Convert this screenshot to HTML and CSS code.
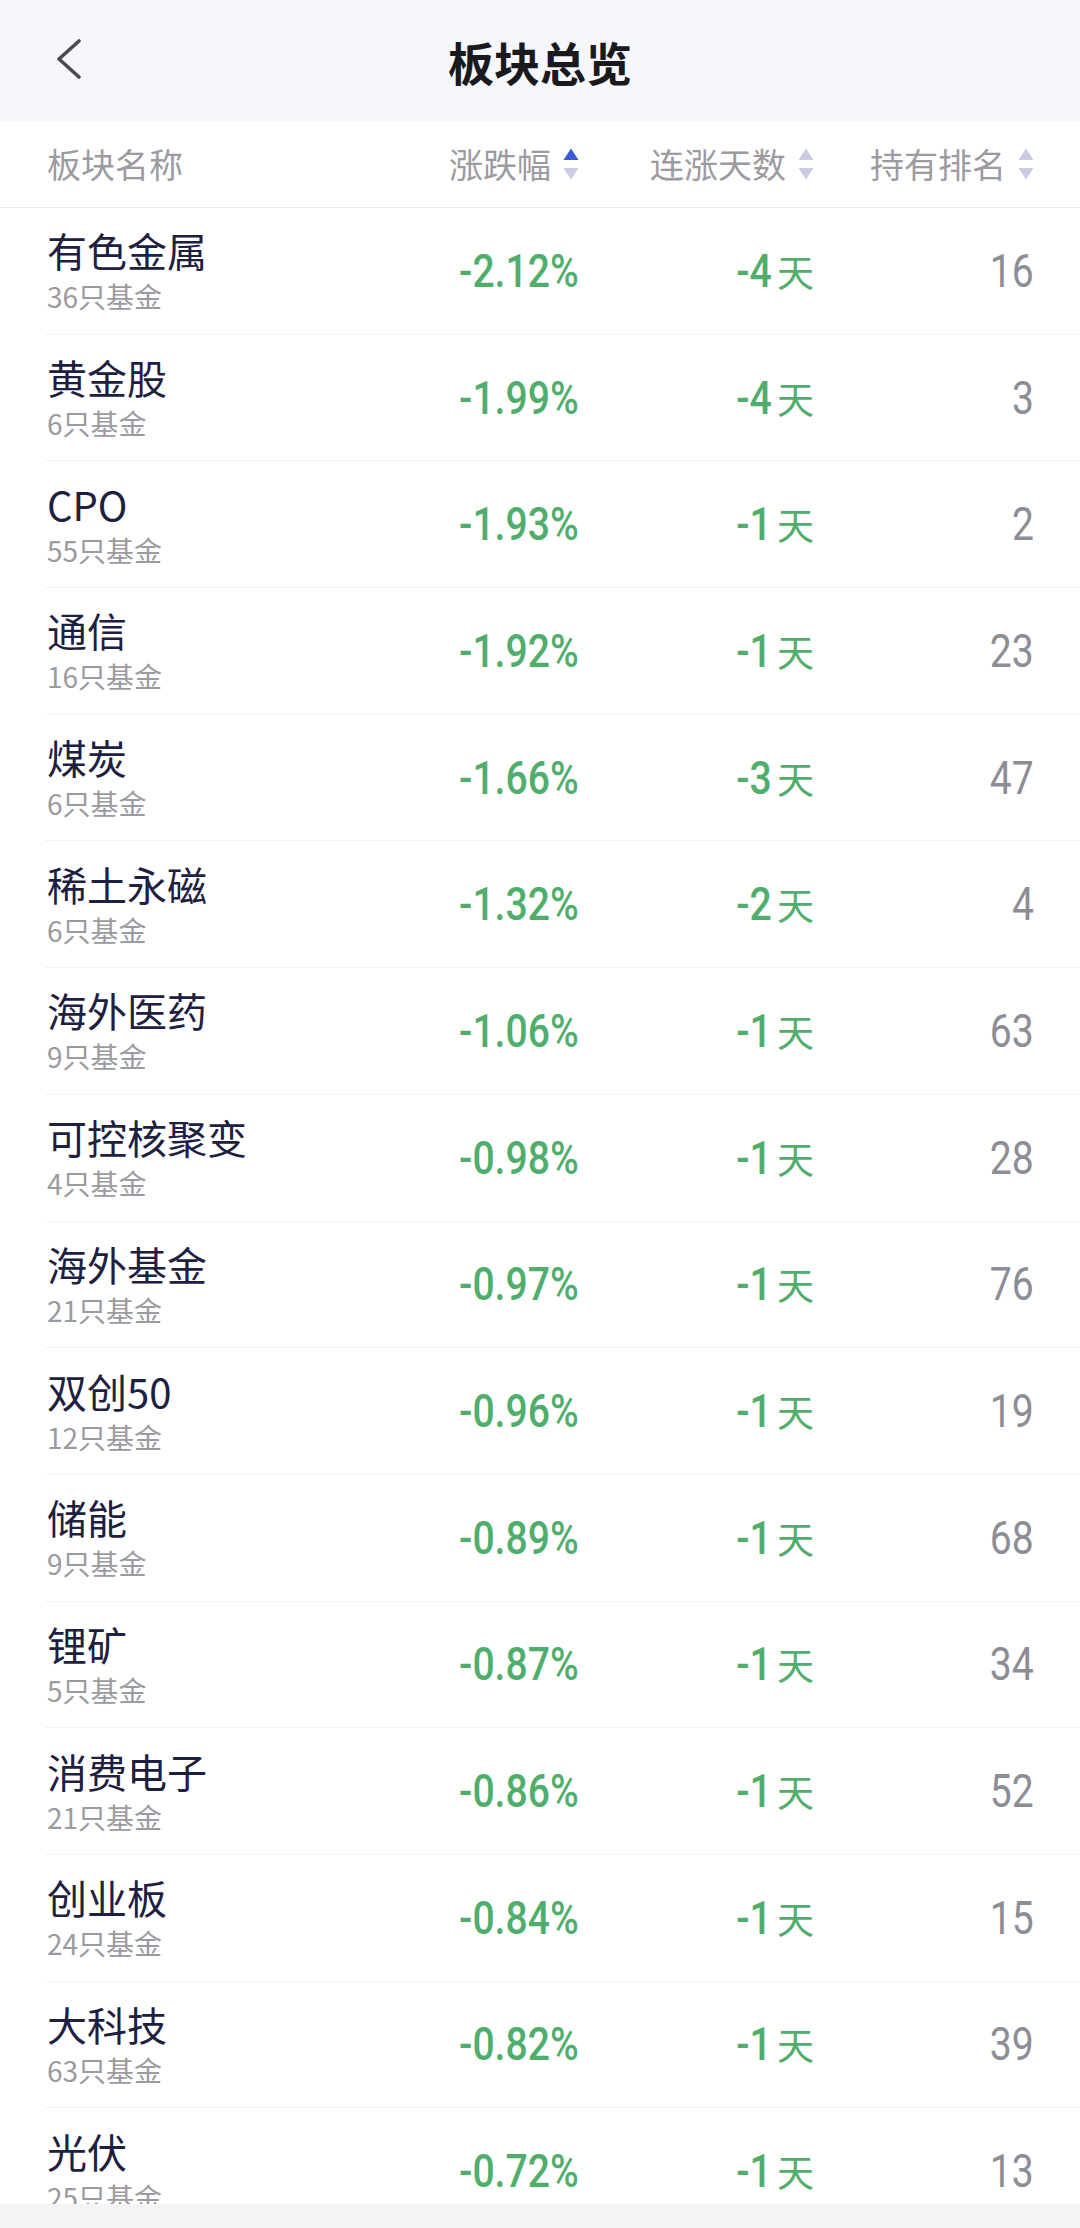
FILE: index.html
```html
<!DOCTYPE html>
<html lang="zh-CN">
<head>
<meta charset="utf-8">
<title>板块总览</title>
<link rel="stylesheet" href="styles.css">
</head>
<body>
<div class="page">
  <header class="nav">
    <div class="nav-left">
      <svg class="back" width="28" height="40" viewBox="0 0 28 40"><polyline points="23,2 3,20 23,38" fill="none" stroke="#4a4a50" stroke-width="3.6" stroke-linecap="round" stroke-linejoin="round"/></svg>
    </div>
    <h1 class="nav-title">板块总览</h1>
    <div class="nav-right"></div>
  </header>

  <div class="thead">
    <div class="col-name">板块名称</div>
    <div class="col col-chg">涨跌幅<svg class="sort" width="16" height="32" viewBox="0 0 16 32"><polygon points="8,0.5 15.5,12 0.5,12" fill="#3d5bd9"/><polygon points="0.5,20 15.5,20 8,31.5" fill="#c9cce3"/></svg></div>
    <div class="col col-days">连涨天数<svg class="sort" width="16" height="32" viewBox="0 0 16 32"><polygon points="8,0.5 15.5,12 0.5,12" fill="#c9cce3"/><polygon points="0.5,20 15.5,20 8,31.5" fill="#c9cce3"/></svg></div>
    <div class="col col-rank">持有排名<svg class="sort" width="16" height="32" viewBox="0 0 16 32"><polygon points="8,0.5 15.5,12 0.5,12" fill="#c9cce3"/><polygon points="0.5,20 15.5,20 8,31.5" fill="#c9cce3"/></svg></div>
  </div>

  <ul class="list">
    <li class="row"><div class="col-name"><div class="name">有色金属</div><div class="sub">36只基金</div></div><div class="col col-chg"><span class="num">-2.12%</span></div><div class="col col-days"><span class="num">-4</span><span class="unit">天</span></div><div class="col col-rank"><span class="num rank">16</span></div></li>
    <li class="row"><div class="col-name"><div class="name">黄金股</div><div class="sub">6只基金</div></div><div class="col col-chg"><span class="num">-1.99%</span></div><div class="col col-days"><span class="num">-4</span><span class="unit">天</span></div><div class="col col-rank"><span class="num rank">3</span></div></li>
    <li class="row"><div class="col-name"><div class="name">CPO</div><div class="sub">55只基金</div></div><div class="col col-chg"><span class="num">-1.93%</span></div><div class="col col-days"><span class="num">-1</span><span class="unit">天</span></div><div class="col col-rank"><span class="num rank">2</span></div></li>
    <li class="row"><div class="col-name"><div class="name">通信</div><div class="sub">16只基金</div></div><div class="col col-chg"><span class="num">-1.92%</span></div><div class="col col-days"><span class="num">-1</span><span class="unit">天</span></div><div class="col col-rank"><span class="num rank">23</span></div></li>
    <li class="row"><div class="col-name"><div class="name">煤炭</div><div class="sub">6只基金</div></div><div class="col col-chg"><span class="num">-1.66%</span></div><div class="col col-days"><span class="num">-3</span><span class="unit">天</span></div><div class="col col-rank"><span class="num rank">47</span></div></li>
    <li class="row"><div class="col-name"><div class="name">稀土永磁</div><div class="sub">6只基金</div></div><div class="col col-chg"><span class="num">-1.32%</span></div><div class="col col-days"><span class="num">-2</span><span class="unit">天</span></div><div class="col col-rank"><span class="num rank">4</span></div></li>
    <li class="row"><div class="col-name"><div class="name">海外医药</div><div class="sub">9只基金</div></div><div class="col col-chg"><span class="num">-1.06%</span></div><div class="col col-days"><span class="num">-1</span><span class="unit">天</span></div><div class="col col-rank"><span class="num rank">63</span></div></li>
    <li class="row"><div class="col-name"><div class="name">可控核聚变</div><div class="sub">4只基金</div></div><div class="col col-chg"><span class="num">-0.98%</span></div><div class="col col-days"><span class="num">-1</span><span class="unit">天</span></div><div class="col col-rank"><span class="num rank">28</span></div></li>
    <li class="row"><div class="col-name"><div class="name">海外基金</div><div class="sub">21只基金</div></div><div class="col col-chg"><span class="num">-0.97%</span></div><div class="col col-days"><span class="num">-1</span><span class="unit">天</span></div><div class="col col-rank"><span class="num rank">76</span></div></li>
    <li class="row"><div class="col-name"><div class="name">双创50</div><div class="sub">12只基金</div></div><div class="col col-chg"><span class="num">-0.96%</span></div><div class="col col-days"><span class="num">-1</span><span class="unit">天</span></div><div class="col col-rank"><span class="num rank">19</span></div></li>
    <li class="row"><div class="col-name"><div class="name">储能</div><div class="sub">9只基金</div></div><div class="col col-chg"><span class="num">-0.89%</span></div><div class="col col-days"><span class="num">-1</span><span class="unit">天</span></div><div class="col col-rank"><span class="num rank">68</span></div></li>
    <li class="row"><div class="col-name"><div class="name">锂矿</div><div class="sub">5只基金</div></div><div class="col col-chg"><span class="num">-0.87%</span></div><div class="col col-days"><span class="num">-1</span><span class="unit">天</span></div><div class="col col-rank"><span class="num rank">34</span></div></li>
    <li class="row"><div class="col-name"><div class="name">消费电子</div><div class="sub">21只基金</div></div><div class="col col-chg"><span class="num">-0.86%</span></div><div class="col col-days"><span class="num">-1</span><span class="unit">天</span></div><div class="col col-rank"><span class="num rank">52</span></div></li>
    <li class="row"><div class="col-name"><div class="name">创业板</div><div class="sub">24只基金</div></div><div class="col col-chg"><span class="num">-0.84%</span></div><div class="col col-days"><span class="num">-1</span><span class="unit">天</span></div><div class="col col-rank"><span class="num rank">15</span></div></li>
    <li class="row"><div class="col-name"><div class="name">大科技</div><div class="sub">63只基金</div></div><div class="col col-chg"><span class="num">-0.82%</span></div><div class="col col-days"><span class="num">-1</span><span class="unit">天</span></div><div class="col col-rank"><span class="num rank">39</span></div></li>
    <li class="row"><div class="col-name"><div class="name">光伏</div><div class="sub">25只基金</div></div><div class="col col-chg"><span class="num">-0.72%</span></div><div class="col col-days"><span class="num">-1</span><span class="unit">天</span></div><div class="col col-rank"><span class="num rank">13</span></div></li>
  </ul>

  <div class="bottom-bar"></div>
</div>
</body>
</html>
```

FILE: styles.css
```css
* { box-sizing: border-box; }

html, body {
  margin: 0;
  padding: 0;
  background: #ffffff;
}

body {
  font-family: "Noto Sans CJK SC", "Noto Sans", sans-serif;
  color: #1d2040;
}

.page {
  width: 1080px;
  height: 2228px;
  display: flex;
  flex-direction: column;
  overflow: hidden;
  background: #ffffff;
}

/* navigation bar */
.nav {
  flex: 0 0 121px;
  height: 121px;
  background: #f6f7fb;
  display: grid;
  grid-template-columns: 1fr auto 1fr;
  align-items: center;
}

.nav-left {
  display: flex;
  align-items: center;
  padding-left: 56px;
  padding-bottom: 3px;
}

.back { display: block; }

.nav-title {
  margin: 0;
  font-size: 46px;
  line-height: 60px;
  font-weight: 700;
  color: #1a1a1e;
  letter-spacing: 0;
}

/* table header */
.thead {
  flex: 0 0 87px;
  height: 87px;
  display: flex;
  align-items: center;
  padding: 0 46px 0 47px;
  border-bottom: 1px solid #ececee;
  font-size: 34px;
  line-height: 40px;
  color: #9b9ba1;
}

.thead .col {
  display: flex;
  align-items: center;
  justify-content: flex-end;
}

.sort {
  display: block;
  margin-left: 12px;
  flex: 0 0 16px;
}

.col-name {
  flex: 1 1 auto;
  min-width: 0;
}

.col {
  display: flex;
  align-items: baseline;
  justify-content: flex-end;
  white-space: nowrap;
}

.col-chg { flex: 0 0 235px; }
.col-days { flex: 0 0 235px; }
.col-rank { flex: 0 0 220px; }

/* rows */
.list {
  flex: 1 1 auto;
  margin: 0;
  padding: 0;
  list-style: none;
  overflow: hidden;
}

.row {
  height: 126.7px;
  margin-left: 45px;
  padding: 0 46px 0 2px;
  display: flex;
  align-items: center;
  border-bottom: 1px solid #f1f1f3;
}

.name {
  font-size: 40px;
  line-height: 46px;
  color: #1d2040;
  white-space: nowrap;
}

.sub {
  margin-top: 5px;
  font-size: 28px;
  line-height: 36px;
  color: #9a9aa0;
  white-space: nowrap;
}

.num {
  display: inline-block;
  font-family: "Roboto", "Liberation Sans", sans-serif;
  font-size: 46px;
  line-height: 46px;
  font-weight: 500;
  color: #4fae6c;
  transform: scaleX(0.85);
  transform-origin: right center;
}

.num.rank {
  font-weight: 400;
  color: #8d8d95;
}

.unit {
  font-size: 37px;
  line-height: 46px;
  font-weight: 400;
  color: #4fae6c;
  margin-left: 5px;
}

.bottom-bar {
  flex: 0 0 24px;
  height: 24px;
  background: #f4f4f5;
}
```
